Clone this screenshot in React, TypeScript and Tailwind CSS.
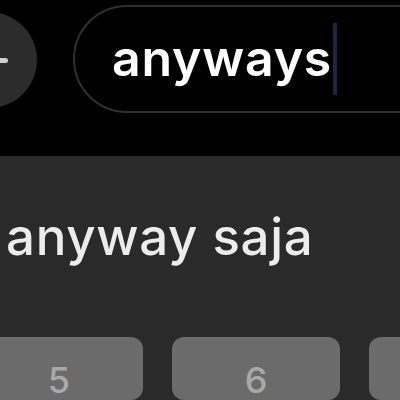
export default function App() {
  return (
    <div className="w-[400px] h-[400px] overflow-hidden bg-[#2a2a2a] font-['Inter','Liberation_Sans',sans-serif]">
      {/* search bar */}
      <div className="h-[156px] bg-black flex items-start">
        <div className="shrink-0 w-[96px] h-[96px] rounded-full bg-[#2c2c2c] ml-[-59px] mt-[12px] flex items-center justify-end pr-[29px]">
          <div className="w-[18px] h-[5px] rounded-full bg-[#cfcfcf]" />
        </div>
        <div className="shrink-0 ml-[36px] mt-[5px] w-[420px] h-[108px] rounded-[54px] border-2 border-[#303030] flex items-center pl-[37px]">
          <span className="text-white text-[50px] font-semibold tracking-[0.8px] leading-none mt-[-2px]">anyways</span>
          <div className="w-[4px] h-[72px] bg-[#1c2744] ml-[1px]" />
        </div>
      </div>

      {/* suggestion */}
      <div className="pl-[6px] pt-[55px] h-[181px]">
        <span className="text-[#ececec] text-[51px] font-medium tracking-[0.7px] leading-none">anyway saja</span>
      </div>

      {/* keys */}
      <div className="flex gap-[29px] ml-[-25px]">
        {['5', '6', '7'].map((k) => (
          <div
            key={k}
            className="shrink-0 w-[168px] h-[63px] rounded-[12px] bg-[#6b6b6b] flex justify-center pt-[25px]"
          >
            <span className="text-[#a9a9a9] text-[36px] font-medium leading-none">{k}</span>
          </div>
        ))}
      </div>
    </div>
  );
}
